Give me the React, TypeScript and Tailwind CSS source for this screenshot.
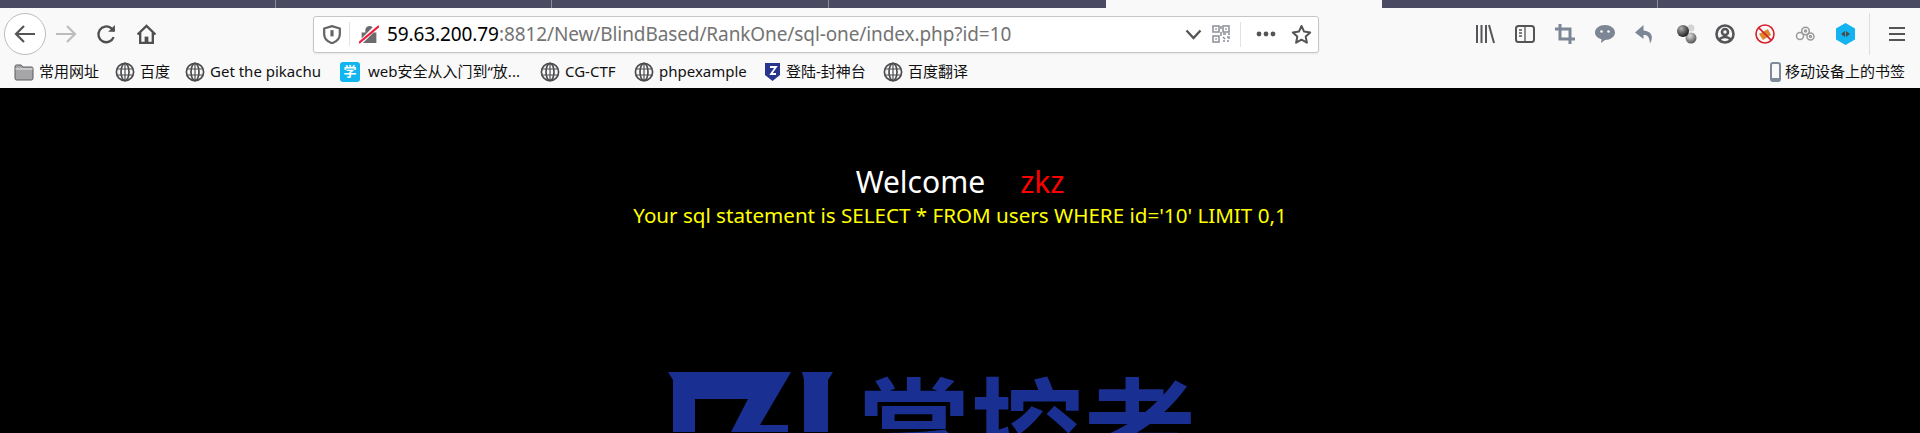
import type { ReactNode } from "react";

const uiFont = "font-['Noto_Sans','Noto_Sans_CJK_SC',sans-serif]";

const Globe = () => (
  <svg width="20" height="20" viewBox="0 0 20 20" fill="none" stroke="#4d4d4f" strokeWidth="1.7">
    <circle cx="10" cy="10" r="8.6" />
    <ellipse cx="10" cy="10" rx="4" ry="8.6" />
    <path d="M1.5 7h17M1.5 13h17M10 1.5v17" strokeWidth="1.2" />
  </svg>
);

const Folder = () => (
  <svg width="20" height="20" viewBox="0 0 20 20">
    <path d="M1 4.5C1 3.7 1.6 3 2.4 3h4.8l1.6 2h8.8c.8 0 1.4.6 1.4 1.4v10.2c0 .8-.6 1.4-1.4 1.4H2.4C1.6 18 1 17.4 1 16.6z" fill="#a6a6a8" stroke="#5b5b5d" strokeWidth="1" />
    <path d="M1.5 7h17" stroke="#ececec" strokeWidth="1" />
  </svg>
);

const Bookmark = ({ icon, label, className }: { icon: ReactNode; label: string; className: string }) => (
  <div className={`flex items-center gap-[5px] shrink-0 ${className}`}>
    {icon}
    <span className="whitespace-nowrap">{label}</span>
  </div>
);

const Slot = ({ w, children }: { w: string; children: ReactNode }) => (
  <div className={`flex items-center justify-center shrink-0 ${w}`}>{children}</div>
);

const Toolbar = () => (
  <div className="flex items-center h-[47px] pt-[5px] bg-[#f9f9fa]">
    <div className="flex items-center justify-center shrink-0 w-[42px] h-[42px] ml-1 rounded-full bg-white border border-[#bdbdbd]">
      <svg width="22" height="20" viewBox="0 0 22 20" fill="none" stroke="#555557" strokeWidth="2.2">
        <path d="M21 10H2M10 2l-8 8 8 8" />
      </svg>
    </div>
    <Slot w="w-[40px]">
      <svg width="22" height="20" viewBox="0 0 22 20" fill="none" stroke="#bdbdbf" strokeWidth="2.2">
        <path d="M1 10h19M12 2l8 8-8 8" />
      </svg>
    </Slot>
    <Slot w="w-[41px]">
      <svg width="21" height="21" viewBox="0 0 20 20" fill="none" stroke="#4f4f51" strokeWidth="2.2">
        <path d="M16.8 12.5A7.5 7.5 0 1 1 14.5 4l3 2.5" />
        <path d="M18 1v6.4h-6.4" fill="#4f4f51" stroke="none" />
      </svg>
    </Slot>
    <Slot w="w-[39px]">
      <svg width="21" height="21" viewBox="0 0 20 20" fill="none" stroke="#4f4f51" strokeWidth="2.2">
        <path d="M1.5 10L10 1.8 18.5 10M4 8v10h12V8" />
        <path d="M8.2 18v-6h3.6v6" fill="#4f4f51" stroke="none" />
      </svg>
    </Slot>
    <div className="flex items-center shrink-0 w-[1006px] h-[37px] ml-[147px] bg-white rounded-[3px] border border-[#c6c6c8] shadow-[0_1px_2px_rgba(0,0,0,0.08)]">
      <Slot w="w-[35px]">
        <svg width="18" height="19" viewBox="0 0 16 17">
          <path d="M8 1l7 2.100v5.200c0 3.700-2.800 6.500-7 8-4.200-1.500-7-4.300-7-8V3.100z" fill="none" stroke="#656567" strokeWidth="2" />
          <path d="M6.600 4.600h2.800v5.600H6.600z" fill="#656567" />
        </svg>
      </Slot>
      <div className="w-px h-[24px] bg-[#e2e2e4] shrink-0" />
      <Slot w="w-[37px]">
        <svg width="20" height="20" viewBox="0 0 19 19">
          <path d="M6 8V6a4 4 0 0 1 8 0v2h2.500v10h-14V8z" fill="#6b6b6d" />
          <path d="M1 18L18 1" stroke="#ffffff" strokeWidth="4" />
          <path d="M0 18L19 2" stroke="#e8213f" strokeWidth="2" />
        </svg>
      </Slot>
      <div className={`text-[19px] tracking-[-0.1px] text-[#737373] whitespace-nowrap ${uiFont}`}>
        <span className="text-black">59.63.200.79</span>:8812/New/BlindBased/RankOne/sql-one/index.php?id=10
      </div>
      <div className="flex-1" />
      <Slot w="w-[30px]">
        <svg width="17" height="11" viewBox="0 0 17 11" fill="none" stroke="#555557" strokeWidth="2.400">
          <path d="M1.500 1.500L8.500 9l7-7.500" />
        </svg>
      </Slot>
      <Slot w="w-[26px]">
        <svg width="18" height="18" viewBox="0 0 18 18" fill="none" stroke="#8b8f96" strokeWidth="1.500">
          <rect x="1" y="1" width="6" height="6" />
          <rect x="11" y="1" width="6" height="6" />
          <rect x="1" y="11" width="6" height="6" />
          <path d="M3.200 3.200h1.600v1.600H3.200zM13.200 3.200h1.600v1.600h-1.600zM3.200 13.200h1.600v1.600H3.200z" fill="#8b8f96" stroke="none" />
          <path d="M9 1v3M9 7v4M11 9h3M16 9h2M11 12l2 2M15 12h2v2M11 16h2M15 16h2" />
        </svg>
      </Slot>
      <div className="w-px h-[25px] bg-[#e2e2e4] ml-[6px] shrink-0" />
      <Slot w="w-[50px]">
        <svg width="20" height="6" viewBox="0 0 20 6" fill="#555557">
          <circle cx="3" cy="3" r="2.400" />
          <circle cx="10" cy="3" r="2.400" />
          <circle cx="17" cy="3" r="2.400" />
        </svg>
      </Slot>
      <Slot w="w-[21px]">
        <svg width="21" height="21" viewBox="0 0 21 21" fill="none" stroke="#555557" strokeWidth="2" strokeLinejoin="round">
          <path d="M10.500 2l2.600 5.600 6.100.8-4.500 4.200 1.200 6.100-5.400-3-5.400 3 1.200-6.100L1.800 8.400l6.100-.8z" />
        </svg>
      </Slot>
      <div className="w-[6px] shrink-0" />
    </div>
    <div className="flex items-center ml-[146px]">
      <Slot w="w-[40px]">
        <svg width="20" height="20" viewBox="0 0 20 20" fill="none" stroke="#555557" strokeWidth="2">
          <path d="M2 1v18M6.500 1v18M11 1v18M14 1l5 18" />
        </svg>
      </Slot>
      <Slot w="w-[40px]">
        <svg width="20" height="20" viewBox="0 0 20 20" fill="none" stroke="#555557" strokeWidth="2">
          <rect x="1" y="2" width="18" height="16" rx="2.500" />
          <path d="M10 2v16M4 6h3M4 9h3M4 12h3" strokeWidth="1.300" />
        </svg>
      </Slot>
      <Slot w="w-[40px]">
        <svg width="20" height="20" viewBox="0 0 20 20" fill="none" stroke="#7c8695" strokeWidth="3">
          <path d="M0 5h15v15M5 0v15h15" />
        </svg>
      </Slot>
      <Slot w="w-[40px]">
        <svg width="20" height="20" viewBox="0 0 20 20" fill="#7c8695">
          <path d="M10 1c5.500 0 10 3.200 10 7.500S15.500 16 10 16l-4 3 .5-3.800C2.700 14.200 0 11.700 0 8.500 0 4.200 4.500 1 10 1z" />
          <circle cx="6.500" cy="7.500" r="1.300" fill="#f9f9fa" />
          <circle cx="13.500" cy="7.500" r="1.300" fill="#f9f9fa" />
        </svg>
      </Slot>
      <Slot w="w-[40px]">
        <svg width="20" height="20" viewBox="0 0 20 20" fill="#7c8695">
          <path d="M8.500 1L0 8.500 8.500 15v-4c4 0 6 1.500 6.500 8.500 3-4.500 3.500-12-6.500-13z" />
        </svg>
      </Slot>
      <Slot w="w-[44px]">
        <svg width="22" height="22" viewBox="0 0 22 22">
          <defs>
            <radialGradient id="ball" cx="35%" cy="30%" r="70%">
              <stop offset="0%" stopColor="#b0b0b0" />
              <stop offset="100%" stopColor="#222" />
            </radialGradient>
            <radialGradient id="ball2" cx="40%" cy="30%" r="70%">
              <stop offset="0%" stopColor="#dddddd" />
              <stop offset="100%" stopColor="#555" />
            </radialGradient>
          </defs>
          <circle cx="15" cy="5" r="3.500" fill="#d4d4d4" />
          <circle cx="15" cy="15" r="5.500" fill="url(#ball2)" />
          <circle cx="7" cy="8" r="6" fill="url(#ball)" />
        </svg>
      </Slot>
      <Slot w="w-[32px]">
        <svg width="20" height="20" viewBox="0 0 20 20" fill="none" stroke="#555557" strokeWidth="2.600">
          <circle cx="10" cy="10" r="8.500" />
          <circle cx="10" cy="8" r="3" fill="#f9f9fa" />
          <path d="M4 16c1.500-2 3.500-3 6-3s4.500 1 6 3" />
        </svg>
      </Slot>
      <Slot w="w-[48px]">
        <svg width="20" height="20" viewBox="0 0 20 20" fill="none">
          <path d="M4 10l9-5 3 6-8 5z" fill="#d98a2b" />
          <circle cx="10" cy="10" r="9" stroke="#d81e2c" strokeWidth="1.600" />
          <path d="M3.600 3.600l12.800 12.800" stroke="#d81e2c" strokeWidth="1.600" />
        </svg>
      </Slot>
      <Slot w="w-[32px]">
        <svg width="20" height="16" viewBox="0 0 20 16" fill="none" stroke="#9a9a9c" strokeWidth="1.500">
          <circle cx="5" cy="10" r="3.500" />
          <circle cx="10.500" cy="5" r="3.800" />
          <circle cx="15.500" cy="10.500" r="3.500" />
          <circle cx="10.500" cy="5" r="1" />
          <circle cx="15.500" cy="10.500" r="1" />
        </svg>
      </Slot>
      <Slot w="w-[48px]">
        <svg width="19" height="22" viewBox="0 0 19 22">
          <path d="M9.500 0l9.500 5.500v11L9.500 22 0 16.500v-11z" fill="#12b3ee" />
          <path d="M9 8l-4 3 4 3zM10 8l4 3-4 3z" fill="#4a4a4c" />
        </svg>
      </Slot>
      <div className="w-px h-[42px] bg-[#dededf] shrink-0" />
      <Slot w="w-[50px] pl-[4px]">
        <svg width="16" height="16" viewBox="0 0 16 16" stroke="#555557" strokeWidth="2.200">
          <path d="M0 2h16M0 8h16M0 14h16" />
        </svg>
      </Slot>
    </div>
  </div>
);

const BookmarksBar = () => (
  <div className={`flex items-center h-[33px] pl-[14px] bg-[#f9f9fa] text-[15px] text-[#111] ${uiFont}`}>
    <Bookmark icon={<Folder />} label="常用网址" className="w-[101px]" />
    <Bookmark icon={<Globe />} label="百度" className="w-[70px]" />
    <Bookmark icon={<Globe />} label="Get the pikachu" className="w-[155px]" />
    <Bookmark
      icon={
        <div className="flex items-center justify-center w-[20px] h-[20px] rounded-[3px] bg-[#11b5f0] text-white text-[13px] font-bold">学</div>
      }
      label="web安全从入门到“放..."
      className="w-[200px] [&>span]:ml-[3px]"
    />
    <Bookmark icon={<Globe />} label="CG-CTF" className="w-[94px]" />
    <Bookmark icon={<Globe />} label="phpexample" className="w-[130px]" />
    <Bookmark
      icon={
        <svg width="17" height="20" viewBox="0 0 17 20">
          <path d="M1 1h15v12l-7.500 6L1 13z" fill="#27358f" />
          <path d="M6 5h6L7 12h5" fill="none" stroke="#fff" strokeWidth="1.800" />
        </svg>
      }
      label="登陆-封神台"
      className="w-[119px]"
    />
    <Bookmark icon={<Globe />} label="百度翻译" className="w-[90px]" />
    <div className="flex-1" />
    <div className="flex items-center gap-[4px] pr-[15px]">
      <svg width="11" height="20" viewBox="0 0 11 20">
        <rect x="1" y="1" width="9" height="18" rx="2" fill="none" stroke="#7f8a99" strokeWidth="2" />
        <rect x="2" y="16" width="7" height="3" fill="#7f8a99" />
      </svg>
      <span className="whitespace-nowrap">移动设备上的书签</span>
    </div>
  </div>
);

const TabStrip = () => (
  <div className="flex h-[8px] bg-[#4a4a63]">
    <div className="w-[276px] border-r border-[#8a8a9a]" />
    <div className="w-[276px] border-r border-[#8a8a9a]" />
    <div className="w-[277px] border-r border-[#8a8a9a]" />
    <div className="w-[277px]" />
    <div className="w-[276px] bg-[#f9f9fa]" />
    <div className="w-[276px] border-r border-[#8a8a9a]" />
    <div className="flex-1" />
  </div>
);

const Logo = () => (
  <div className="flex items-start h-[60px] mt-[143px] pr-[56px]">
    <svg width="166" height="60" viewBox="0 0 166 60" className="shrink-0">
      <path d="M0 0h123L92 53h28v7H63L80 27H27v33H5V8z" fill="#1a2f92" />
      <path d="M134 0h31l-5 8v52h-24V8z" fill="#1a2f92" />
    </svg>
    <div className="ml-[24px] -mt-[23px] text-[113px] leading-[150px] font-semibold text-[#1a2f92] font-['Noto_Sans_CJK_SC',sans-serif] whitespace-nowrap">
      掌控者
    </div>
  </div>
);

export default function App() {
  return (
    <div className="h-[433px] overflow-hidden bg-black">
      <TabStrip />
      <Toolbar />
      <BookmarksBar />
      <div className={`flex flex-col items-center pt-[74px] ${uiFont}`}>
        <div className="flex gap-[35px] text-[30px] leading-[40px]">
          <span className="text-white">Welcome</span>
          <span className="text-[#ff0000]">zkz</span>
        </div>
        <div className="text-[20.6px] leading-[27px] text-[#ffff00] whitespace-nowrap">
          Your sql statement is SELECT * FROM users WHERE id=&#39;10&#39; LIMIT 0,1
        </div>
        <Logo />
      </div>
    </div>
  );
}
